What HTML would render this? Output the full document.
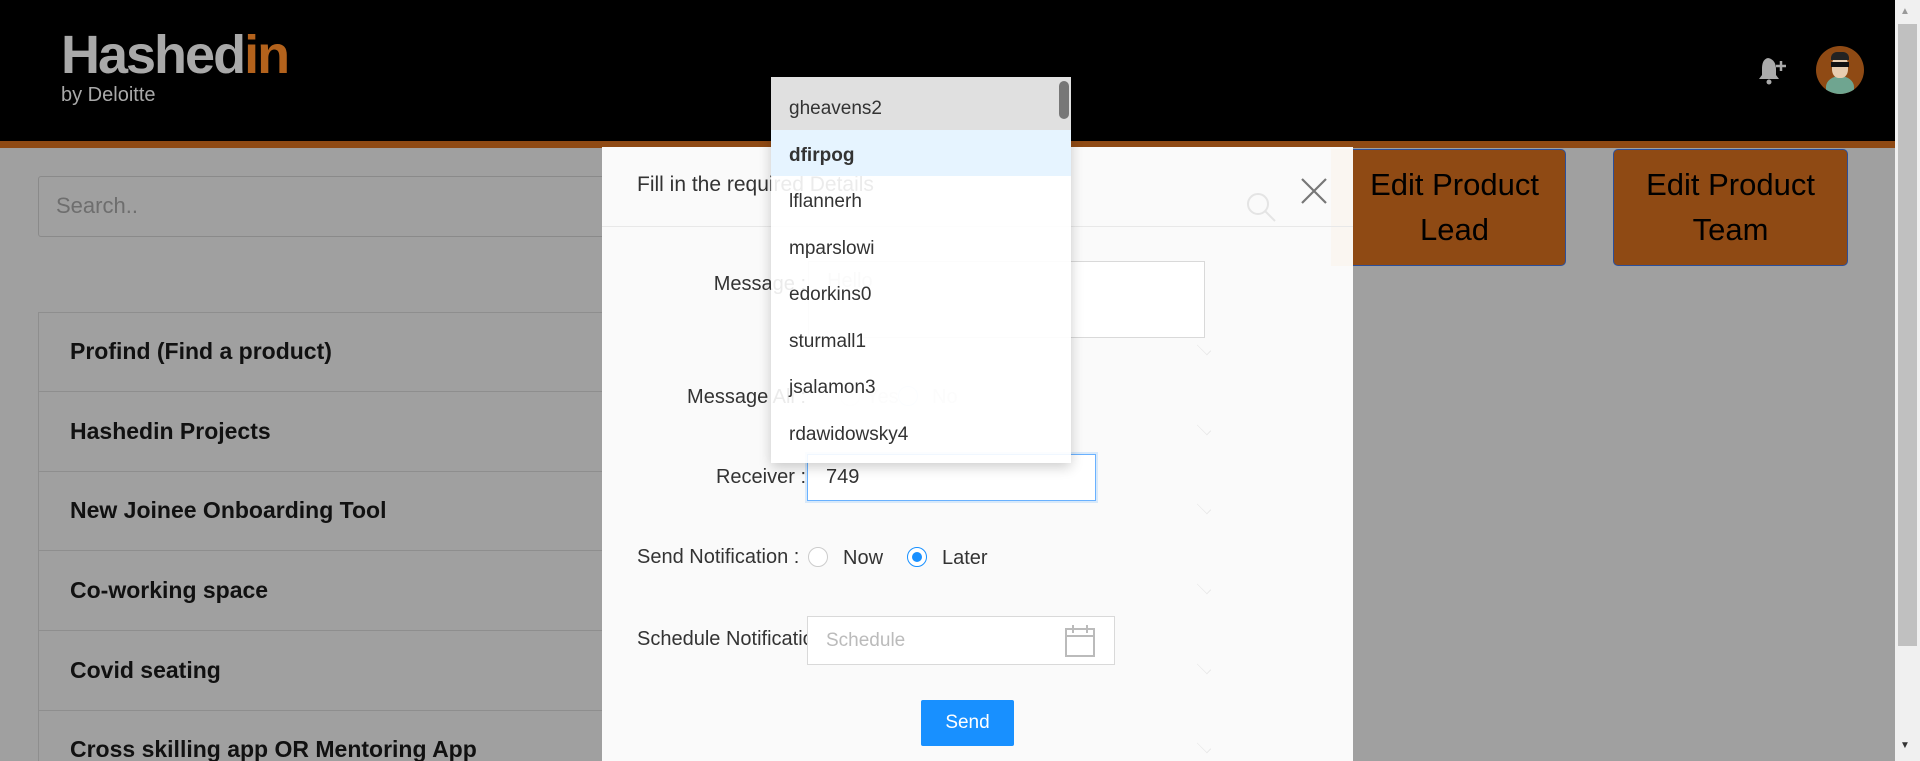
<!DOCTYPE html>
<html style="height:761px;overflow:hidden"><head><meta charset="utf-8"><style>
*{box-sizing:border-box;margin:0;padding:0}
body{width:1920px;height:761px;overflow:hidden;background:#a0a0a0;font-family:"Liberation Sans",sans-serif;position:relative}
.abs{position:absolute}
.hdr{left:0;top:0;width:1895px;height:141px;background:#000}
.oline{left:0;top:141px;width:1895px;height:7px;background:#8f4a14}
.sb{left:1895px;top:0;width:25px;height:761px;background:#f0f0f0}
.sbt{left:1898px;top:24px;width:19px;height:622px;background:#c0c0c0}
.row{left:38px;width:1300px;height:80px;border:1px solid #8e8e8e;border-top:none;font-size:23px;font-weight:bold;color:#111;padding:26px 31px}
.btn{top:149px;height:117px;background:#8f4a14;border:1px solid #2c4f9a;border-radius:5px;font-size:31px;color:#000;text-align:center;line-height:45px;padding-top:12px}
.modal{left:602px;top:147px;width:751px;height:614px;background:#fafafa}
.lbl{font-size:20px;color:#333;text-align:right;width:200px;left:606px}
.dd{left:771px;top:77px;width:300px;height:386px;background:rgba(255,255,255,.9);box-shadow:0 4px 12px rgba(0,0,0,.2);overflow:hidden;padding-top:9px}
.it{height:46.5px;font-size:19px;color:#333;padding:12px 18px}
.radio{width:20px;height:20px;border:1px solid #ccc;border-radius:50%;background:#fff}
.chev{left:1196px;width:16px;height:10px;border-right:1px solid #e6e6e6;border-bottom:1px solid #e6e6e6;transform:rotate(45deg) scale(.9,.6)}
</style></head><body>
<div class="abs hdr"></div>
<div class="abs" style="left:61px;top:24px;font-size:54px;font-weight:bold;color:#a9a9a9;letter-spacing:-2px">Hashed<span style="color:#b3621c">in</span></div>
<div class="abs" style="left:61px;top:84px;font-size:20px;color:#a9a9a9">by Deloitte</div>
<svg class="abs" style="left:1756px;top:55px" width="36" height="32" viewBox="0 0 36 32"><path d="M12 3c-5 1-6 6-6 11v6l-3 4h20l-3-4v-6c0-5-2-10-8-11z" fill="#aaa"/><circle cx="13" cy="27" r="2.5" fill="#aaa"/><path d="M25 6v10M20 11h10" stroke="#aaa" stroke-width="2.5"/></svg>
<div class="abs" style="left:1816px;top:46px;width:48px;height:48px;border-radius:50%;background:#8f4a14;overflow:hidden"><div style="position:absolute;left:10px;top:30px;width:28px;height:22px;border-radius:50% 50% 0 0;background:#6fa590"></div><div style="position:absolute;left:16px;top:10px;width:16px;height:22px;border-radius:40%;background:#e8cdb0"></div><div style="position:absolute;left:15px;top:6px;width:18px;height:8px;border-radius:6px 6px 0 0;background:#222"></div><div style="position:absolute;left:15px;top:16px;width:18px;height:5px;background:#111"></div></div>
<div class="abs oline"></div>
<div class="abs sb"></div><div class="abs sbt"></div>
<div class="abs" style="left:1900px;top:6px;font-size:10px;color:#999">▲</div>
<div class="abs" style="left:1900px;top:740px;font-size:10px;color:#333">▼</div>
<div class="abs" style="left:38px;top:176px;width:1300px;height:61px;border:1px solid #8a8a8a;border-radius:3px;font-size:22px;color:#6e6e6e;padding:16px 17px">Search..</div>
<div class="abs" style="left:38px;top:312px;width:1300px;height:1px;background:#8e8e8e"></div>
<div class="abs row" style="top:312px">Profind (Find a product)</div>
<div class="abs row" style="top:392px">Hashedin Projects</div>
<div class="abs row" style="top:471px">New Joinee Onboarding Tool</div>
<div class="abs row" style="top:551px">Co-working space</div>
<div class="abs row" style="top:631px">Covid seating</div>
<div class="abs row" style="top:710px;height:51px;border-bottom:none">Cross skilling app OR Mentoring App</div>
<div class="abs btn" style="left:1343px;width:223px">Edit Product<br>Lead</div>
<div class="abs btn" style="left:1613px;width:235px">Edit Product<br>Team</div>
<div class="abs modal"></div>
<div class="abs" style="left:1331px;top:149px;width:22px;height:117px;background:rgba(250,245,240,.9)"></div>
<div class="abs" style="left:637px;top:173px;font-size:21px;color:#333">Fill in the required Details</div>
<svg class="abs" style="left:1300px;top:177px" width="28" height="28" viewBox="0 0 28 28"><path d="M2 2L26 26M26 2L2 26" stroke="#777" stroke-width="2.2"/></svg>
<div class="abs" style="left:602px;top:226px;width:751px;height:1px;background:#e8e8e8"></div>
<svg class="abs" style="left:1244px;top:190px" width="34" height="34" viewBox="0 0 34 34"><circle cx="14" cy="14" r="10" fill="none" stroke="#e4e4e4" stroke-width="2"/><path d="M21 21L31 31" stroke="#e4e4e4" stroke-width="2"/></svg>
<div class="abs chev" style="top:343px"></div><div class="abs chev" style="top:423px"></div><div class="abs chev" style="top:502px"></div><div class="abs chev" style="top:582px"></div><div class="abs chev" style="top:662px"></div><div class="abs chev" style="top:741px"></div>
<div class="abs lbl" style="top:273px">Message :</div>
<div class="abs" style="left:808px;top:261px;width:397px;height:77px;border:1px solid #d9d9d9;background:#fff;font-size:20px;color:#ccc;padding:8px 18px">Hello</div>
<div class="abs lbl" style="top:386px">Message All :</div>
<div class="abs radio" style="left:840px;top:386px;border-color:#eee"></div><div class="abs" style="left:866px;top:386px;font-size:20px;color:#ddd">Yes</div>
<div class="abs radio" style="left:898px;top:386px;border-color:#d5e8ff"></div><div class="abs" style="left:932px;top:386px;font-size:20px;color:#ddd">No</div>
<div class="abs lbl" style="top:466px">Receiver :</div>
<div class="abs" style="left:807px;top:454px;width:289px;height:47px;border:1px solid #69b1ff;box-shadow:0 0 0 2px rgba(24,144,255,.15);background:#fff;font-size:20px;color:#333;padding:11px 18px">749</div>
<div class="abs" style="left:637px;top:546px;font-size:20px;color:#333;width:170px;white-space:nowrap">Send Notification :</div>
<div class="abs radio" style="left:808px;top:547px"></div><div class="abs" style="left:843px;top:547px;font-size:20px;color:#333">Now</div>
<div class="abs radio" style="left:907px;top:547px;border:1px solid #1890ff"><div style="margin:4px;width:10px;height:10px;border-radius:50%;background:#1890ff"></div></div><div class="abs" style="left:942px;top:547px;font-size:20px;color:#333">Later</div>
<div class="abs" style="left:637px;top:628px;font-size:20px;color:#333;width:170px;overflow:hidden;white-space:nowrap">Schedule Notification</div>
<div class="abs" style="left:807px;top:616px;width:308px;height:49px;border:1px solid #d9d9d9;background:#fff;font-size:19px;color:#bbb;padding:13px 18px">Schedule</div>
<svg class="abs" style="left:1064px;top:624px" width="32" height="34" viewBox="0 0 32 34"><rect x="2" y="5" width="28" height="27" fill="none" stroke="#bbb" stroke-width="2"/><path d="M2 12h28M9 1v8M23 1v8" stroke="#bbb" stroke-width="2"/></svg>
<div class="abs" style="left:921px;top:700px;width:93px;height:46px;background:#1890ff;border-radius:2px;color:#fff;font-size:19px;text-align:center;line-height:46px">Send</div>
<div class="abs dd">
<div class="abs" style="left:0;top:0;width:300px;height:53px;background:#e0e0e0"></div>
<div class="abs" style="left:0;top:53px;width:300px;height:46px;background:#e6f4ff"></div>
<div class="it" style="position:relative">gheavens2</div>
<div class="it" style="position:relative;font-weight:bold">dfirpog</div>
<div class="it">lflannerh</div>
<div class="it">mparslowi</div>
<div class="it">edorkins0</div>
<div class="it">sturmall1</div>
<div class="it">jsalamon3</div>
<div class="it">rdawidowsky4</div>
<div class="abs" style="left:288px;top:4px;width:10px;height:38px;border-radius:5px;background:#777"></div>
</div>
</body></html>
